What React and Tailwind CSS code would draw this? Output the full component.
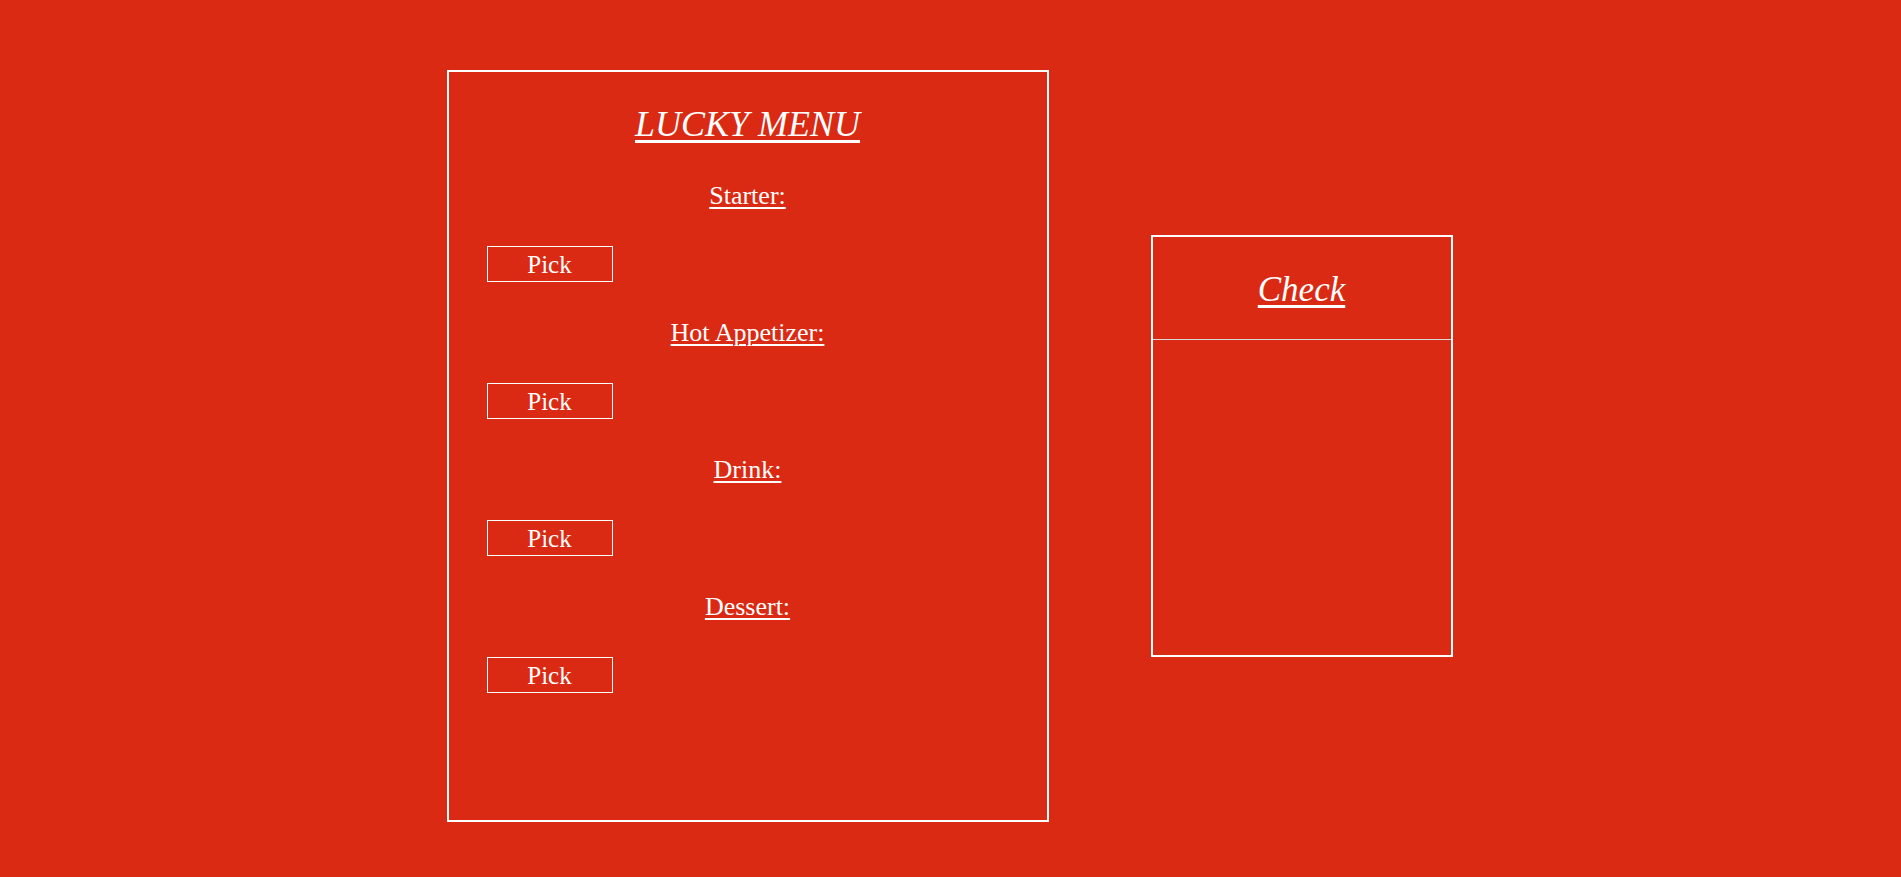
const courses = ['Starter:', 'Hot Appetizer:', 'Drink:', 'Dessert:'];

function CourseRow({ label }) {
    return (
        <div className="flex flex-col gap-[38px]">
            <h3 className="text-center text-[26px] leading-[25px] underline decoration-2 underline-offset-[3px]">{label}</h3>
            <div className="pl-[38px]">
                <button className="w-[126px] h-[36px] border border-white text-[25px] leading-none text-white">
                    Pick
                </button>
            </div>
        </div>
    );
}

export default function App() {
    return (
        <div
            className="min-h-screen bg-[#da2a13] text-white flex justify-center items-center gap-[102px] pt-[70px] pb-[55px]"
            style={{ fontFamily: '"Liberation Serif", "DejaVu Serif", serif' }}
        >
            {/* Menu card */}
            <div className="w-[602px] h-[752px] border-2 border-white pt-[34px] -ml-[2px]">
                <h1 className="text-center text-[36px] leading-[36px] italic underline decoration-[3px] underline-offset-[4px] mb-[41px]">
                    LUCKY MENU
                </h1>
                <div className="flex flex-col gap-[38px]">
                    {courses.map((c) => (
                        <CourseRow key={c} label={c} />
                    ))}
                </div>
            </div>

            {/* Check card */}
            <div className="w-[302px] h-[422px] border-2 border-white">
                <div className="h-[103px] border-b border-[#d8d8d8] pt-[35px]">
                    <h2 className="text-center text-[35px] leading-[35px] italic underline decoration-[3px] underline-offset-[4px]">
                        Check
                    </h2>
                </div>
            </div>
        </div>
    );
}
